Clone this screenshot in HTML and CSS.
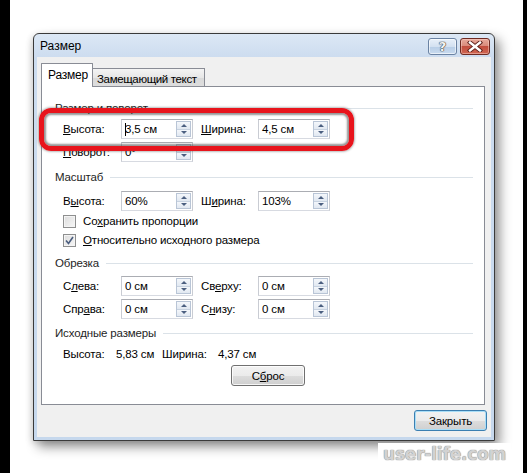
FILE: index.html
```html
<!DOCTYPE html>
<html lang="ru">
<head>
<meta charset="utf-8">
<title>Размер</title>
<link rel="stylesheet" href="styles.css">
</head>
<body>
<div class="strip-l"></div>
<div class="stage">
  <div class="dialog">
    <div class="titlebar">
      <span class="title">Размер</span>
      <div class="caption-btns">
        <div class="cbtn help"><span class="q">?</span></div>
        <div class="cbtn close">
          <svg width="16" height="11" viewBox="0 0 16 11">
            <path d="M3 1.5 L13 9.5 M13 1.5 L3 9.5" stroke="#5a1d18" stroke-width="4.2" stroke-linecap="square"/>
            <path d="M3 1.5 L13 9.5 M13 1.5 L3 9.5" stroke="#ffffff" stroke-width="2.4" stroke-linecap="square"/>
          </svg>
        </div>
      </div>
    </div>
    <div class="client">
      <div class="tabs">
        <div class="tab active">Размер</div>
        <div class="tab">Замещающий текст</div>
      </div>
      <div class="panel">
        <div class="heading h1"><span>Размер и поворот</span><i></i></div>
        <div class="row r1">
          <span class="lbl"><u>В</u>ысота:</span>
          <div class="field"><span class="val"><b class="caret"></b>3,5 см</span><div class="spin"><s class="up"></s><s class="dn"></s></div></div>
          <span class="lbl l2"><u>Ш</u>ирина:</span>
          <div class="field"><span class="val">4,5 см</span><div class="spin"><s class="up"></s><s class="dn"></s></div></div>
        </div>
        <div class="row r2">
          <span class="lbl"><u>П</u>оворот:</span>
          <div class="field"><span class="val">0°</span><div class="spin"><s class="up"></s><s class="dn"></s></div></div>
        </div>
        <div class="heading h2"><span>Масштаб</span><i></i></div>
        <div class="row r3">
          <span class="lbl">В<u>ы</u>сота:</span>
          <div class="field"><span class="val">60%</span><div class="spin"><s class="up"></s><s class="dn"></s></div></div>
          <span class="lbl l2">Ш<u>и</u>рина:</span>
          <div class="field"><span class="val">103%</span><div class="spin"><s class="up"></s><s class="dn"></s></div></div>
        </div>
        <div class="check c1"><span class="box"></span><span>Со<u>х</u>ранить пропорции</span></div>
        <div class="check c2"><span class="box checked">
          <svg width="9" height="9" viewBox="0 0 9 9"><path d="M1 4.5 L3.5 7.5 L8 1" fill="none" stroke="#4a5d7e" stroke-width="1.6"/></svg>
        </span><span><u>О</u>тносительно исходного размера</span></div>
        <div class="heading h3"><span>Обрезка</span><i></i></div>
        <div class="row r4">
          <span class="lbl">С<u>л</u>ева:</span>
          <div class="field"><span class="val">0 см</span><div class="spin"><s class="up"></s><s class="dn"></s></div></div>
          <span class="lbl l2">Св<u>е</u>рху:</span>
          <div class="field"><span class="val">0 см</span><div class="spin"><s class="up"></s><s class="dn"></s></div></div>
        </div>
        <div class="row r5">
          <span class="lbl">Спр<u>а</u>ва:</span>
          <div class="field"><span class="val">0 см</span><div class="spin"><s class="up"></s><s class="dn"></s></div></div>
          <span class="lbl l2">С<u>н</u>изу:</span>
          <div class="field"><span class="val">0 см</span><div class="spin"><s class="up"></s><s class="dn"></s></div></div>
        </div>
        <div class="heading h4"><span>Исходные размеры</span><i></i></div>
        <div class="info">
          <span class="i1">Высота:</span><span class="i2">5,83 см</span><span class="i3">Ширина:</span><span>4,37 см</span>
        </div>
        <div class="btn reset">С<u>б</u>рос</div>
      </div>
      <div class="footer">
        <div class="btn closebtn">Закрыть</div>
      </div>
    </div>
  </div>
  <div class="highlight"></div>
  <div class="watermark">user-life.com</div>
</div>
<div class="strip-r"></div>
</body>
</html>
```
FILE: styles.css
```css
* { box-sizing: border-box; }
html, body { margin: 0; padding: 0; }
body {
  width: 527px;
  height: 473px;
  display: flex;
  background: #fff;
  overflow: hidden;
  font-family: "Liberation Sans", Arial, sans-serif;
  font-size: 11.5px;
  letter-spacing: -0.15px;
  color: #000;
}
.strip-l { width: 10px; background: #000; flex: none; }
.strip-r { width: 4px; background: #000; flex: none; }
.stage {
  flex: 1;
  position: relative;
  padding: 33px 0 0 23px;
}
.dialog {
  width: 462px;
  height: 408px;
  border: 1px solid #3a3a3a;
  border-radius: 6px 6px 0 0;
  background: linear-gradient(#dce8f5, #ccdcef 24px, #c6d8ed);
  display: flex;
  flex-direction: column;
  padding: 0 3px 3px;
  box-shadow: 5px 6px 12px rgba(0,0,0,0.42), -2px 2px 6px rgba(0,0,0,0.12);
}
.titlebar {
  height: 23px;
  display: flex;
  align-items: flex-start;
  justify-content: space-between;
  flex: none;
}
.title {
  margin: 5px 0 0 3px;
  line-height: 14px;
  font-size: 12px;
  letter-spacing: 0;
}
.caption-btns {
  display: flex;
  gap: 3px;
  margin-top: 4px;
}
.cbtn {
  height: 17px;
  border-radius: 3px;
  display: flex;
  align-items: center;
  justify-content: center;
}
.help {
  width: 29px;
  border: 1px solid #6b83a3;
  background: linear-gradient(#e8f0f9, #d3e1f1 50%, #b7cde6 51%, #c9dbef);
  box-shadow: inset 0 0 0 1px rgba(255,255,255,0.6);
}
.help .q {
  font-family: "DejaVu Sans", sans-serif;
  font-weight: bold;
  font-size: 13px;
  line-height: 13px;
  color: #f3f3f3;
  text-shadow: 0 0 1px #3a3a3a, 0 0 1px #3a3a3a, 0 0 1px #3a3a3a;
}
.close {
  width: 30px;
  border: 1px solid #6e2a22;
  background: linear-gradient(#e8a99b, #d98b7c 45%, #c24d3d 50%, #cf6753);
  box-shadow: inset 0 0 0 1px rgba(255,220,210,0.45);
  margin-right: 1px;
}
.client {
  flex: 1;
  background: #f0f0f0;
  padding: 6px 0 0 4px;
  display: flex;
  flex-direction: column;
}
.tabs {
  display: flex;
  align-items: flex-end;
  height: 24px;
  flex: none;
}
.tab {
  height: 19px;
  width: 113px;
  margin-left: -1px;
  border: 1px solid #898c95;
  border-bottom: none;
  background: linear-gradient(#f4f4f4, #e6e6e6 50%, #d9d9d9 51%, #dedede);
  padding: 3px 0 0 4px;
  line-height: 14px;
  white-space: nowrap;
  overflow: hidden;
  font-size: 11.5px;
  letter-spacing: -0.35px;
}
.tab.active {
  height: 24px;
  width: 52px;
  margin-left: 0;
  background: #fff;
  position: relative;
  z-index: 1;
  padding: 4px 0 0 6px;
  border-radius: 1px 1px 0 0;
  font-size: 12px;
  letter-spacing: -0.2px;
}
.panel {
  margin-top: -1px;
  width: 444px;
  height: 319px;
  border: 1px solid #898c95;
  background: #fff;
  padding: 13px 11px 0 13px;
  flex: none;
}
.heading {
  display: flex;
  align-items: center;
  height: 16px;
  line-height: 16px;
  color: #1e1e1e;
}
.heading i {
  flex: 1;
  height: 1px;
  background: #dbe2e8;
  margin-left: 7px;
}
.row {
  display: flex;
  align-items: center;
  height: 20px;
  padding-left: 8px;
}
.lbl { width: 58px; flex: none; }
.lbl.l2 { width: 57px; margin-left: 8px; }
.field {
  width: 72px;
  height: 20px;
  border: 1px solid #abadb3;
  border-left-color: #c9ccd3;
  border-right-color: #c9ccd3;
  border-bottom-color: #d7dae1;
  background: #fff;
  display: flex;
  align-items: center;
  padding: 1px 1px 1px 3px;
}
.val { flex: 1; line-height: 14px; display: flex; align-items: center; }
.caret {
  width: 1px;
  height: 13px;
  background: #000;
  margin-right: -1px;
}
.spin {
  width: 15px;
  height: 16px;
  display: flex;
  flex-direction: column;
  border: 1px solid #b9c5d6;
  background: #fff;
}
.spin s {
  flex: 1;
  display: flex;
  align-items: center;
  justify-content: center;
  background: linear-gradient(#f4f7fb, #e1e8f1);
}
.spin s.up { border-bottom: 1px solid #c7d2e0; }
.spin s::before {
  content: "";
  border-left: 3px solid transparent;
  border-right: 3px solid transparent;
}
.spin s.up::before { border-bottom: 3px solid #4b5f80; }
.spin s.dn::before { border-top: 3px solid #4b5f80; }
.h1 { margin-top: 0; }
.r1 { margin-top: 3px; }
.r2 { margin-top: 3px; }
.h2 { margin-top: 7px; }
.r3 { margin-top: 6px; }
.check {
  display: flex;
  align-items: center;
  height: 16px;
  padding-left: 8px;
}
.c1 { margin-top: 2px; }
.c2 { margin-top: 3px; }
.box {
  width: 13px;
  height: 13px;
  border: 1px solid #8e8f8f;
  background: linear-gradient(135deg, #dcdcdc, #f7f7f7);
  box-shadow: inset 0 0 0 1px #f4f4f4;
  margin-right: 7px;
  display: flex;
  align-items: center;
  justify-content: center;
  flex: none;
}
.h3 { margin-top: 7px; }
.r4 { margin-top: 5px; }
.r5 { margin-top: 3px; }
.h4 { margin-top: 6px; }
.info {
  margin-top: 5px;
  height: 16px;
  line-height: 16px;
  padding-left: 8px;
  display: flex;
}
.i1 { width: 53px; }
.i2 { width: 46px; }
.i3 { width: 56px; }
.btn {
  height: 21px;
  border: 1px solid #707070;
  border-radius: 3px;
  background: linear-gradient(#f2f2f2, #ebebeb 50%, #dddddd 51%, #cfcfcf);
  box-shadow: inset 0 0 0 1px rgba(255,255,255,0.8);
  display: flex;
  align-items: center;
  justify-content: center;
  line-height: 14px;
}
.reset {
  width: 74px;
  margin: 3px 0 0 176px;
}
.footer {
  display: flex;
  justify-content: flex-end;
  padding: 5px 4px 0 0;
}
.closebtn {
  width: 73px;
  border-color: #3c7fb1;
  box-shadow: inset 0 0 0 1px #a9def7;
  background: linear-gradient(#f2f2f2, #ebebeb 50%, #dddddd 51%, #cfcfcf);
}
.highlight {
  position: absolute;
  left: 29px;
  top: 108px;
  width: 315px;
  height: 43px;
  border: 5px solid #e8141c;
  border-radius: 12px;
  box-shadow: inset 0 0 2px 2px rgba(60,60,60,0.55), 0 0 2px 1px rgba(60,60,60,0.35);
}
.watermark {
  position: absolute;
  left: 368px;
  top: 443px;
  width: 133px;
  height: 23px;
  background: #fff;
  font-family: "DejaVu Sans", sans-serif;
  font-weight: bold;
  font-size: 17px;
  line-height: 23px;
  letter-spacing: -0.2px;
  padding-left: 5px;
  color: #d2d2d2;
  text-shadow: 0 0 1px #8a8a8a, 0 0 1px #8a8a8a;
  white-space: nowrap;
  overflow: hidden;
}
```
